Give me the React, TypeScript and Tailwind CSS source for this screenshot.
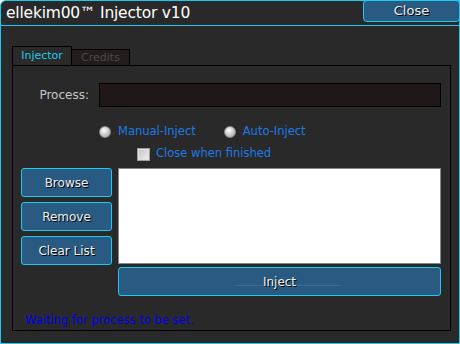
import React from "react";

const btn =
  "flex items-center justify-center bg-[#285a82] border border-[#1ec8f0] rounded-[3px] text-[#f0f0f0] text-[12px] [text-shadow:1px_1px_0_#000]";

function Radio({ label }: { label: string }) {
  return (
    <div className="flex items-center gap-[7px]">
      <div className="w-[12px] h-[12px] rounded-full border border-[#8a8a8a] bg-[radial-gradient(circle_at_40%_35%,#ffffff_0%,#d0d0d0_45%,#9a9a9a_100%)]" />
      <span className="text-[#1e7ae8] text-[11.5px]">{label}</span>
    </div>
  );
}

export default function App() {
  return (
    <div
      className="w-[460px] h-[344px] bg-[#292929] border border-[#1ec8f0] rounded-tl-[6px] flex flex-col overflow-hidden"
      style={{ fontFamily: "Verdana, 'DejaVu Sans', sans-serif" }}
    >
      <div className="h-[25px] flex items-start justify-between border-b border-[#1ec8f0] shrink-0">
        <div className="text-white text-[15.5px] leading-[24px] pl-[5px] tracking-[-0.2px]">
          ellekim00™ Injector v10
        </div>
        <div className={`${btn} w-[97px] h-[22px] mt-[-1px] mr-[-1px] rounded-[4px] text-[13px]`}>
          Close
        </div>
      </div>
      <div className="flex flex-col pl-[11px] pt-[20px]">
        <div className="flex items-end h-[20px]">
          <div className="w-[60px] h-[20px] border border-b-0 border-black bg-[#2a2a2a] text-[#1ec8f0] text-[11px] flex items-center justify-center">
            Injector
          </div>
          <div className="w-[58px] h-[17px] border border-b-0 border-l-0 border-black bg-[#221d1d] text-[#4a4a4a] text-[11px] flex items-center justify-center">
            Credits
          </div>
        </div>
        <div className="w-[439px] h-[266px] border border-black -mt-px flex flex-col">
          <div className="flex items-center mt-[17px]">
            <span className="w-[76px] text-right text-[#c8c8c8] text-[12px]">Process:</span>
            <div className="ml-[10px] w-[342px] h-[24px] bg-[#201818] border border-black" />
          </div>
          <div className="flex items-center mt-[18px] ml-[86px] gap-[28px] h-[14px]">
            <Radio label="Manual-Inject" />
            <Radio label="Auto-Inject" />
          </div>
          <div className="flex items-center mt-[8px] ml-[124px] gap-[6px] h-[14px]">
            <div className="w-[13px] h-[13px] border border-[#a0a0a0] bg-[linear-gradient(135deg,#c0c0c0,#f4f4f4)] shadow-[inset_0_0_0_1px_#e0e0e0]" />
            <span className="text-[#1e7ae8] text-[11.5px]">Close when finished</span>
          </div>
          <div className="flex mt-[7px] ml-[8px] gap-[6px]">
            <div className="flex flex-col gap-[5px]">
              <div className={`${btn} w-[91px] h-[29px]`}>Browse</div>
              <div className={`${btn} w-[91px] h-[29px]`}>Remove</div>
              <div className={`${btn} w-[91px] h-[29px]`}>Clear List</div>
            </div>
            <div className="flex flex-col gap-[3px]">
              <div className="w-[323px] h-[96px] bg-white border border-[#808890]" />
              <div className={`${btn} w-[323px] h-[29px] relative`}>
                <span className="absolute left-[117px] right-[100px] top-[17px] h-px bg-[#3d6c92]" />
                <span className="relative">Inject</span>
              </div>
            </div>
          </div>
          <div className="mt-[16px] ml-[12px] text-[#0000e6] text-[11.5px]">
            Waiting for process to be set.
          </div>
        </div>
      </div>
    </div>
  );
}
